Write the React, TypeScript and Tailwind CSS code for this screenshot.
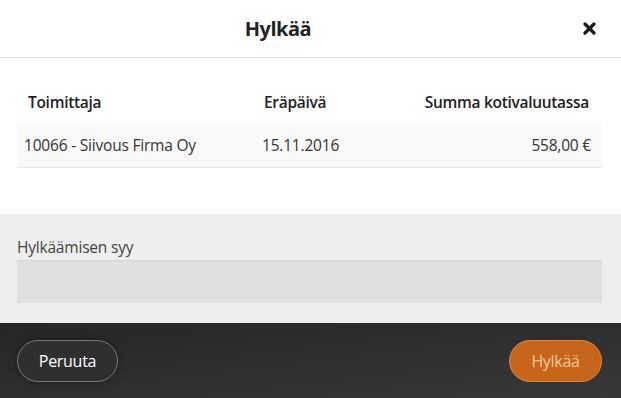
import React from "react";

export default function App() {
  return (
    <div
      className="w-[621px] h-[398px] bg-white flex flex-col overflow-hidden"
      style={{ fontFamily: '"Open Sans", "Noto Sans", sans-serif' }}
    >
      {/* Header */}
      <div className="h-[58px] shrink-0 border-b border-[#dedede] flex items-center">
        <div className="flex-1 text-center">
          <h1 className="text-[20px] font-bold text-[#222] tracking-[-0.5px]">Hylkää</h1>
        </div>
        <button className="w-[65px] h-[58px] flex items-center justify-center pl-[2px]">
          <svg width="13" height="13" viewBox="0 0 13 13">
            <path d="M2 2 L11 11 M11 2 L2 11" stroke="#1a1a1a" strokeWidth="3.2" strokeLinecap="round" />
          </svg>
        </button>
      </div>

      {/* Table */}
      <div className="pl-[17px] pr-[19px] pt-[22px] h-[156px] shrink-0">
        <div className="flex items-center h-[45px] text-[15.5px] font-semibold text-[#222] tracking-[-0.3px]">
          <div className="w-[236px] pl-[11px]">Toimittaja</div>
          <div className="w-[140px] pl-[11px]">Eräpäivä</div>
          <div className="flex-1 text-right pr-[13px]">Summa kotivaluutassa</div>
        </div>
        <div className="flex items-center h-[43px] bg-[#f9f9f9] border-b border-[#e8e8e8] text-[15.5px] text-[#333] tracking-[-0.2px]">
          <div className="w-[236px] pl-[7px]">10066 - Siivous Firma Oy</div>
          <div className="w-[140px] pl-[9px]">15.11.2016</div>
          <div className="flex-1 text-right pr-[11px]">558,00 €</div>
        </div>
      </div>

      {/* Reason section */}
      <div className="h-[109px] shrink-0 bg-[#eeeeee] pl-[17px] pr-[19px] pt-[22px]">
        <div className="text-[15.5px] text-[#444] tracking-[-0.2px] leading-[22px]">Hylkäämisen syy</div>
        <div className="mt-[2px] h-[43px] bg-[#e0e0e0] border-t border-[#d6d6d6]" />
      </div>

      {/* Footer */}
      <div className="flex-1 bg-gradient-to-br from-[#262626] to-[#383838] flex items-center justify-between pl-[17px] pr-[19px]">
        <button className="h-[42px] w-[101px] rounded-full border border-[#7a7a7a] bg-[#2f2f2f] text-white text-[16px] tracking-[-0.3px] shadow-[0_0_8px_rgba(0,0,0,0.35)]">
          Peruuta
        </button>
        <button className="h-[42px] w-[93px] rounded-full border border-[#d9873f] bg-[#c7661a] text-[#f2c89e] text-[16px] tracking-[-0.3px]">
          Hylkää
        </button>
      </div>
    </div>
  );
}
